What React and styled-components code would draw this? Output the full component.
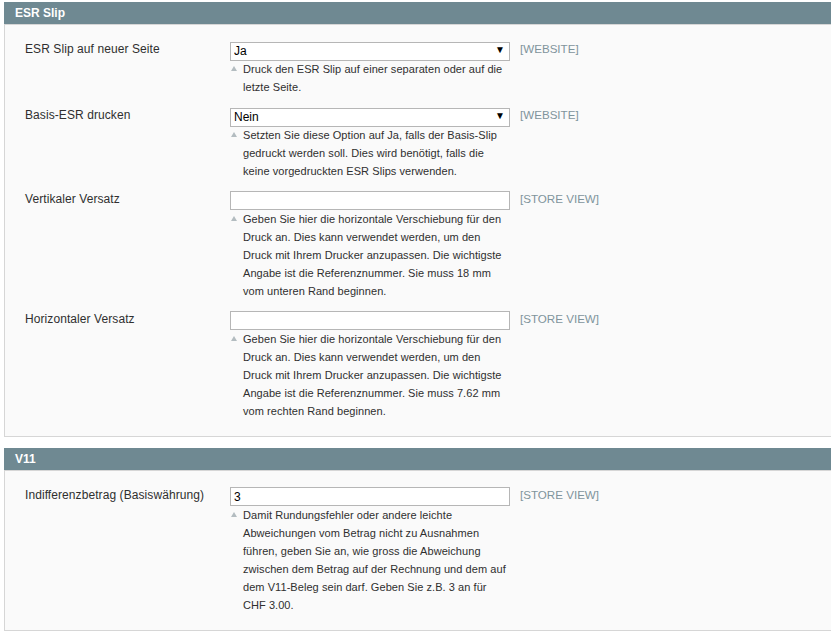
import React from "react";
import styled, { createGlobalStyle } from "styled-components";

const sections = [
    {
        title: "ESR Slip",
        rows: [
            {
                label: "ESR Slip auf neuer Seite",
                type: "select",
                value: "Ja",
                scope: "[WEBSITE]",
                note: ["Druck den ESR Slip auf einer separaten oder auf die", "letzte Seite."],
            },
            {
                label: "Basis-ESR drucken",
                type: "select",
                value: "Nein",
                scope: "[WEBSITE]",
                note: [
                    "Setzten Sie diese Option auf Ja, falls der Basis-Slip",
                    "gedruckt werden soll. Dies wird benötigt, falls die",
                    "keine vorgedruckten ESR Slips verwenden.",
                ],
            },
            {
                label: "Vertikaler Versatz",
                type: "text",
                value: "",
                scope: "[STORE VIEW]",
                note: [
                    "Geben Sie hier die horizontale Verschiebung für den",
                    "Druck an. Dies kann verwendet werden, um den",
                    "Druck mit Ihrem Drucker anzupassen. Die wichtigste",
                    "Angabe ist die Referenznummer. Sie muss 18 mm",
                    "vom unteren Rand beginnen.",
                ],
            },
            {
                label: "Horizontaler Versatz",
                type: "text",
                value: "",
                scope: "[STORE VIEW]",
                note: [
                    "Geben Sie hier die horizontale Verschiebung für den",
                    "Druck an. Dies kann verwendet werden, um den",
                    "Druck mit Ihrem Drucker anzupassen. Die wichtigste",
                    "Angabe ist die Referenznummer. Sie muss 7.62 mm",
                    "vom rechten Rand beginnen.",
                ],
            },
        ],
    },
    {
        title: "V11",
        rows: [
            {
                label: "Indifferenzbetrag (Basiswährung)",
                type: "text",
                value: "3",
                scope: "[STORE VIEW]",
                note: [
                    "Damit Rundungsfehler oder andere leichte",
                    "Abweichungen vom Betrag nicht zu Ausnahmen",
                    "führen, geben Sie an, wie gross die Abweichung",
                    "zwischen dem Betrag auf der Rechnung und dem auf",
                    "dem V11-Beleg sein darf. Geben Sie z.B. 3 an für",
                    "CHF 3.00.",
                ],
            },
        ],
    },
];

const App = () => {
    return (
        <>
            <GlobalStyle />
            <Page>
                {sections.map((section) => (
                    <Section key={section.title}>
                        <SectionHead>{section.title}</SectionHead>
                        <SectionBody>
                            {section.rows.map((row) => (
                                <Row key={row.label}>
                                    <Label>{row.label}</Label>
                                    <Field>
                                        {row.type === "select" ? (
                                            <SelectWrap>
                                                <Select defaultValue={row.value}>
                                                    <option>Ja</option>
                                                    <option>Nein</option>
                                                </Select>
                                                <Arrow>▼</Arrow>
                                            </SelectWrap>
                                        ) : (
                                            <Input type="text" defaultValue={row.value} />
                                        )}
                                        <Note>
                                            {row.note.map((line, i) => (
                                                <span key={i}>
                                                    {line}
                                                    <br />
                                                </span>
                                            ))}
                                        </Note>
                                    </Field>
                                    <Scope>{row.scope}</Scope>
                                </Row>
                            ))}
                        </SectionBody>
                    </Section>
                ))}
            </Page>
        </>
    );
};

export default App;


// ---styles---

const GlobalStyle = createGlobalStyle`
    html, body {
        margin: 0;
        padding: 0;
        overflow: hidden;
        background: #ffffff;
    }
    body {
        font-family: "Liberation Sans", Arial, sans-serif;
        color: #2f2f2f;
    }
`

const Page = styled.div`
    padding: 2px 0 0 4px;
    display: flex;
    flex-direction: column;
    gap: 11px;
`

const Section = styled.div`
    width: 840px;
`

const SectionHead = styled.div`
    height: 22px;
    line-height: 22px;
    padding-left: 11px;
    background: #6f8992;
    color: #ffffff;
    font-weight: bold;
    font-size: 12px;
    border-bottom: 1px solid #d6d6d6;
`

const SectionBody = styled.div`
    background: #fafafa;
    border: 1px solid #d6d6d6;
    border-top: none;
    padding: 10px 0 11px;
`

const Row = styled.div`
    display: flex;
    align-items: flex-start;
    padding: 6px 0 5px;
`

const Label = styled.div`
    width: 205px;
    padding-left: 20px;
    font-size: 12px;
    letter-spacing: 0.08px;
    line-height: 16px;
    color: #2f2f2f;
`

const Field = styled.div`
    width: 280px;
    display: flex;
    flex-direction: column;
`

const SelectWrap = styled.div`
    position: relative;
    height: 19px;
`

const Select = styled.select`
    appearance: none;
    -webkit-appearance: none;
    width: 100%;
    height: 19px;
    box-sizing: border-box;
    margin: 0;
    padding: 0 0 0 3px;
    border: 1px solid #b6b6b6;
    border-radius: 0;
    background: #ffffff;
    font-family: "Liberation Sans", Arial, sans-serif;
    font-size: 12px;
    color: #000000;
    outline: none;
`

const Arrow = styled.span`
    position: absolute;
    right: 5px;
    top: 3px;
    font-size: 10px;
    line-height: 12px;
    color: #000000;
    pointer-events: none;
`

const Input = styled.input`
    width: 100%;
    height: 19px;
    box-sizing: border-box;
    margin: 0;
    padding: 0 0 0 3px;
    border: 1px solid #b6b6b6;
    border-radius: 0;
    background: #ffffff;
    font-family: "Liberation Sans", Arial, sans-serif;
    font-size: 12px;
    color: #000000;
    outline: none;
`

const Note = styled.div`
    position: relative;
    padding-left: 13px;
    font-size: 11px;
    letter-spacing: 0.06px;
    line-height: 18px;
    color: #2f2f2f;
    &::before {
        content: "";
        position: absolute;
        left: 1px;
        top: 6px;
        border-left: 3.5px solid transparent;
        border-right: 3.5px solid transparent;
        border-bottom: 5px solid #b3bcc0;
    }
`

const Scope = styled.div`
    margin-left: 10px;
    font-size: 11.6px;
    line-height: 16px;
    color: #7f949c;
`
